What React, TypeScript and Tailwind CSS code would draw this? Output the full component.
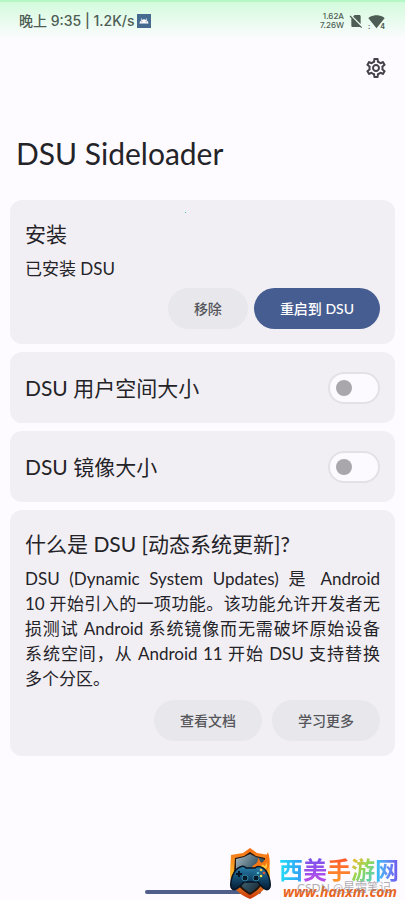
import React from 'react';
import { MdNoSim, MdOutlineSettings, MdSignalWifi4Bar, MdAndroid } from 'react-icons/md';

const Card: React.FC<{ children: React.ReactNode }> = ({ children }) => (
  <section className="rounded-xl bg-[#f2eff4] px-[15px]">{children}</section>
);

const TonalButton: React.FC<{ children: React.ReactNode }> = ({ children }) => (
  <button type="button" className="h-[41px] rounded-full bg-[#e7e7ec] px-[26px] text-sm font-medium text-[#55555a]">
    {children}
  </button>
);

const SwitchCard: React.FC<{ id: string, label: string }> = ({ id, label }) => (
  <Card>
    <div className="flex h-[71px] items-center justify-between">
      <label htmlFor={id} className="text-[21px]">{label}</label>
      <input
        id={id}
        type="checkbox"
        role="switch"
        className="flex h-8 w-[52px] appearance-none items-center rounded-full border-2 border-[#e2e1e6] bg-[#fcfaff] px-[6px] before:size-4 before:rounded-full before:bg-[#a9a7ab] before:content-[''] checked:justify-end checked:bg-[#465d91]"
      />
    </div>
  </Card>
);

const StatusBar: React.FC = () => (
  <header className="flex h-10 items-center justify-between border-t-2 border-[#b5f8c6] bg-gradient-to-b from-[#d3fbdd] to-[#fdfbff] pr-5 pl-[19px] font-[Inter,'Noto_Sans_CJK_SC',sans-serif] text-[#4e5d55]">
    <div className="flex items-center gap-[2px] text-sm font-medium">
      <span>晚上 9:35 | 1.2K/s</span>
      <span className="flex h-[14px] w-[14px] items-center justify-center bg-[#476a91] text-white"><MdAndroid size={10} /></span>
    </div>
    <div className="flex items-center gap-1">
      <div className="text-right text-[8px] leading-[9px] font-medium">
        <div>1.62A</div>
        <div>7.26W</div>
      </div>
      <MdNoSim size={16} />
      <div className="relative">
        <MdSignalWifi4Bar size={17} />
        <span className="absolute right-0 bottom-0 text-[7px] leading-[7px] font-bold">4</span>
        <span className="absolute bottom-0 left-0 text-[7px] leading-[7px] font-bold">:</span>
      </div>
    </div>
  </header>
);

const ShieldLogo: React.FC = () => (
  <svg viewBox="0 0 46 52" className="h-[52px] w-[46px]" aria-hidden="true">
    <defs>
      <linearGradient id="flame" x1="0" y1="0" x2="0" y2="1">
        <stop offset="0" stopColor="#f36b12" />
        <stop offset="0.5" stopColor="#ffb52b" />
        <stop offset="1" stopColor="#c9350b" />
      </linearGradient>
      <linearGradient id="steel" x1="0" y1="0" x2="1" y2="1">
        <stop offset="0" stopColor="#a9bac1" />
        <stop offset="0.5" stopColor="#3b5a6a" />
        <stop offset="1" stopColor="#0c1c28" />
      </linearGradient>
      <linearGradient id="pad" x1="0" y1="0" x2="0" y2="1">
        <stop offset="0" stopColor="#2b82ad" />
        <stop offset="0.5" stopColor="#124b70" />
        <stop offset="1" stopColor="#071c32" />
      </linearGradient>
    </defs>
    <path d="M23 0 30 5 42 7 43 25C43 38 34 46 23 51 11 46 3 38 3 25L4 7 16 5Z" fill="url(#flame)" />
    <path d="M23 4 29 8 38 10 39 25C38 35 32 42 23 47 14 42 7 35 7 25L8 10 17 8Z" fill="#27150f" />
    <path d="M23 6 29 9 37 11V25C36 34 31 40 23 45 15 40 10 34 9 25V11L17 9Z" fill="url(#steel)" />
    <path d="M24 22C25 15 31 18 31 10 34 13 33 16 36 14 39 11 39 7 41 4 43 12 44 17 39 25Z" fill="#f47714" />
    <path d="M29 22C31 18 34 20 36 16 37 19 39 18 40 14 41 20 38 23 36 25Z" fill="#ffc73c" />
    <path d="M13 19Q17 17 19 20H28Q31 17 36 20C41 23 44 34 43 39 41 44 37 42 31 34H17C10 42 6 44 4 39 3 33 6 22 13 19Z" fill="url(#pad)" stroke="#061524" strokeWidth="1.5" />
    <path d="M12 23V29M9 26H15" stroke="#051322" strokeWidth="2" />
    <circle cx="18" cy="30" r="3" fill="#081b2b" stroke="#3284a5" />
    <circle cx="29" cy="30" r="3" fill="#081b2b" stroke="#3284a5" />
    <circle cx="34" cy="22" r="1.3" fill="#f2c640" />
    <circle cx="37" cy="25" r="1.3" fill="#e75632" />
    <circle cx="31" cy="25" r="1.3" fill="#52b9c7" />
    <circle cx="34" cy="28" r="1.3" fill="#e9e04e" />
  </svg>
);

const Watermark: React.FC = () => (
  <div className="absolute right-1 bottom-0 flex h-[52px] items-start gap-[6px]">
    <ShieldLogo />
    <div className="relative h-[52px] w-[122px] font-bold">
      <div className="pt-2 text-2xl leading-7 whitespace-nowrap">
        <span className="bg-gradient-to-r from-[#20dff5] to-[#3399f5] bg-clip-text text-transparent">西</span>
        <span className="bg-gradient-to-b from-[#6e50ed] to-[#c04be8] bg-clip-text text-transparent">美</span>
        <span className="bg-gradient-to-b from-[#ff4b2b] to-[#ff9b28] bg-clip-text text-transparent">手</span>
        <span className="bg-gradient-to-br from-[#ffae20] via-[#8fd653] to-[#35c9cf] bg-clip-text text-transparent">游</span>
        <span className="bg-gradient-to-r from-[#20c8f5] to-[#7052ee] bg-clip-text text-transparent">网</span>
      </div>
      <a href="#site" className="block pl-1 font-['Open_Sans'] text-sm leading-4 text-[#e9641c] italic">www.hanxm.com</a>
      <span className="absolute top-8 left-[18px] text-xs leading-4 font-normal whitespace-nowrap text-[#8d8b90]/70">CSDN @星霜笔记</span>
    </div>
  </div>
);

// Each entry is one justified line of the description
const description = [
  'DSU (Dynamic System Updates) 是 Android',
  '10 开始引入的一项功能。该功能允许开发者无',
  '损测试 Android 系统镜像而无需破坏原始设备',
  '系统空间，从 Android 11 开始 DSU 支持替换',
];

export default function App() {
  return (
    <div lang="zh-CN" className="relative flex min-h-screen flex-col bg-[#fdfbff] font-[Lato,'Noto_Sans_CJK_SC',sans-serif] text-[#242328]">
      <StatusBar />
      <div className="flex justify-end px-[17px] pt-4">
        <button type="button" aria-label="设置" className="text-[#46444b]"><MdOutlineSettings size={24} /></button>
      </div>
      <h1 className="px-4 pt-[53px] text-3xl leading-10">DSU Sideloader</h1>

      <main className="flex flex-col gap-2 px-[10px] pt-[27px] pb-[60px]">
        <Card>
          <div className="relative pt-[20px] pb-[15px]">
            <span aria-hidden="true" className="absolute top-3 left-[160px] size-px bg-[#3cc4b4]" />
            <h2 className="text-[21px] leading-7">安装</h2>
            <p className="pt-2 text-[17px] leading-[25px]">已安装 DSU</p>
            <div className="flex justify-end gap-[6px] pt-[7px]">
              <TonalButton>移除</TonalButton>
              <button type="button" className="h-[41px] rounded-full bg-[#465d91] px-[26px] text-sm font-medium text-white">重启到 DSU</button>
            </div>
          </div>
        </Card>
        <SwitchCard id="userdata" label="DSU 用户空间大小" />
        <SwitchCard id="image" label="DSU 镜像大小" />
        <Card>
          <div className="pt-[20px] pb-[15px]">
            <h2 className="text-[21px] leading-7">什么是 DSU [动态系统更新]?</h2>
            <div className="pt-2 text-[17px] leading-[25px]">
              {description.map(line => (
                <p key={line} className="whitespace-nowrap [text-align-last:justify]">{line}</p>
              ))}
              <p>多个分区。</p>
            </div>
            <div className="flex justify-end gap-[10px] pt-[9px]">
              <TonalButton>查看文档</TonalButton>
              <TonalButton>学习更多</TonalButton>
            </div>
          </div>
        </Card>
      </main>

      <div className="mt-auto flex justify-center pb-[6px]">
        <div className="h-1 w-[116px] rounded-full bg-[#505e8a]" />
      </div>
      <Watermark />
    </div>
  );
}
